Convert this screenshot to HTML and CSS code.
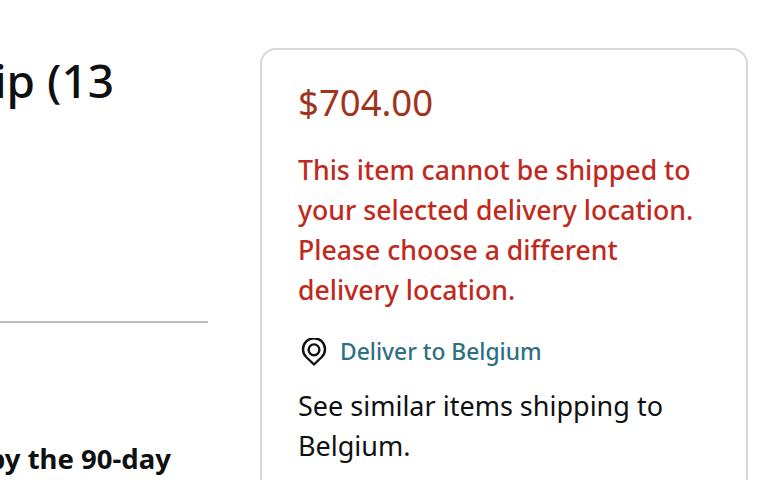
FILE: index.html
```html
<!DOCTYPE html>
<html lang="en">
<head>
<meta charset="utf-8">
<title>Product</title>
<link rel="stylesheet" href="styles.css">
</head>
<body>
<div class="page">
  <section class="main">
    <h1 class="title">Ship (13</h1>
    <hr class="rule">
    <p class="note">by the 90-day</p>
  </section>
  <aside class="card">
    <div class="price">$704.00</div>
    <p class="error">This item cannot be shipped to your selected delivery location. Please choose a different delivery location.</p>
    <div class="deliver">
      <svg class="pin" viewBox="0 0 26 28" width="26" height="28" aria-hidden="true">
        <path d="M13 26.5 L5.2 19 A11 11 0 1 1 20.8 19 Z" fill="none" stroke="#0f1111" stroke-width="2.4" stroke-linejoin="round"/>
        <circle cx="13" cy="11.8" r="5.4" fill="none" stroke="#0f1111" stroke-width="2.4"/>
      </svg>
      <a class="link" href="#">Deliver to Belgium</a>
    </div>
    <p class="similar">See similar items shipping to Belgium.</p>
  </aside>
</div>
</body>
</html>
```
FILE: styles.css
```css
html, body {
  margin: 0;
  padding: 0;
  height: 100%;
  overflow: hidden;
  background: #fff;
}

.page {
  display: flex;
  align-items: flex-start;
  gap: 52px;
  width: 772px;
  height: 480px;
  overflow: hidden;
  font-family: "Noto Sans", "Open Sans", sans-serif;
  color: #0f1111;
}

.main {
  flex: 0 0 208px;
  display: flex;
  flex-direction: column;
  padding-top: 50px;
  overflow: hidden;
}

.title {
  margin: 0 0 0 -60px;
  font-size: 46px;
  line-height: 60px;
  font-weight: 500;
  white-space: nowrap;
}

.rule {
  margin: 211px 0 0;
  height: 2px;
  border: 0;
  background: #bbb;
}

.note {
  margin: 120px 0 0 -12px;
  font-size: 27.5px;
  line-height: 32px;
  font-weight: 700;
  white-space: nowrap;
}

.card {
  flex: 0 0 488px;
  box-sizing: border-box;
  height: 520px;
  margin-top: 48px;
  padding: 32px 36px 0;
  border: 2px solid #d5d9d9;
  border-radius: 16px;
  font-size: 27px;
  font-weight: 450;
  line-height: 40px;
}

.price {
  font-size: 36.5px;
  line-height: 40px;
  color: #a0341c;
}

.error {
  margin: 28px 0 0;
  font-size: 26.65px;
  font-weight: 500;
  color: #c0291d;
}

.deliver {
  display: flex;
  align-items: center;
  gap: 13px;
  margin-top: 22px;
}

.pin {
  flex: none;
  margin-left: 3px;
}

.link {
  font-size: 22.8px;
  font-weight: 500;
  color: #2f6f84;
  text-decoration: none;
}

.similar {
  margin: 14px 0 0;
}
```
